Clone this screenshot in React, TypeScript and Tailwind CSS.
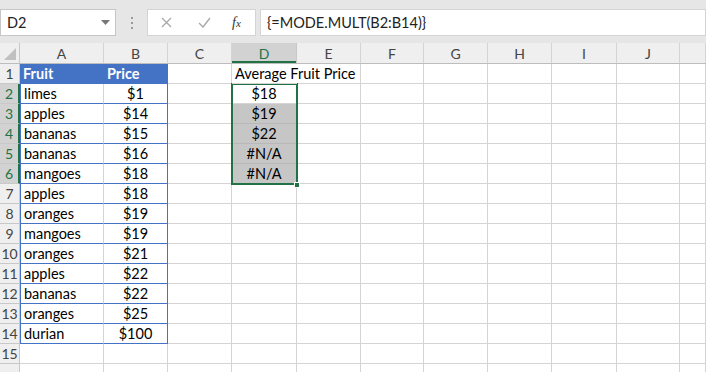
import React from "react";

const cols = [
  { l: "A", w: 84 },
  { l: "B", w: 64 },
  { l: "C", w: 64 },
  { l: "D", w: 65 },
  { l: "E", w: 64 },
  { l: "F", w: 63 },
  { l: "G", w: 64 },
  { l: "H", w: 64 },
  { l: "I", w: 65 },
  { l: "J", w: 63 },
  { l: "", w: 26 },
];

const data: [string, string][] = [
  ["limes", "$1"],
  ["apples", "$14"],
  ["bananas", "$15"],
  ["bananas", "$16"],
  ["mangoes", "$18"],
  ["apples", "$18"],
  ["oranges", "$19"],
  ["mangoes", "$19"],
  ["oranges", "$21"],
  ["apples", "$22"],
  ["bananas", "$22"],
  ["oranges", "$25"],
  ["durian", "$100"],
];

const dvals = ["$18", "$19", "$22", "#N/A", "#N/A"];

const font = { fontFamily: "Lato, 'Open Sans', sans-serif" };

export default function App() {
  const rows = Array.from({ length: 16 }, (_, i) => i + 1);
  return (
    <div className="w-[706px] h-[372px] overflow-hidden bg-white text-[#222]" style={font}>
      {/* formula bar */}
      <div className="h-[43px] bg-[#e6e6e6] flex items-start pt-[9px]">
        <div className="w-[116px] h-[27px] bg-white border border-[#c6c6c6] flex items-center justify-between pl-[6px] pr-[5px] text-[14.5px]">
          <span>D2</span>
          <svg width="9" height="5" viewBox="0 0 9 5"><path d="M0 0h9L4.5 5z" fill="#777" /></svg>
        </div>
        <div className="w-[31px] h-[27px] flex items-center justify-center">
          <div className="flex flex-col gap-[3px]">
            <div className="w-[2px] h-[2px] bg-[#9a9a9a]" />
            <div className="w-[2px] h-[2px] bg-[#9a9a9a]" />
            <div className="w-[2px] h-[2px] bg-[#9a9a9a]" />
          </div>
        </div>
        <div className="w-[109px] h-[27px] bg-white border border-[#d4d4d4] flex items-center">
          <svg className="ml-[13px]" width="11" height="11" viewBox="0 0 11 11"><path d="M1 1l9 9M10 1l-9 9" stroke="#a8a8a8" strokeWidth="1.3" /></svg>
          <svg className="ml-[26px]" width="13" height="11" viewBox="0 0 13 11"><path d="M1 6l4 4 7-9" stroke="#a8a8a8" strokeWidth="1.4" fill="none" /></svg>
          <span className="ml-[21px] italic text-[14px] text-[#333]" style={{ fontFamily: "'Liberation Serif', serif" }}>
            f<span className="text-[11px]">x</span>
          </span>
        </div>
        <div className="ml-[4px] flex-1 h-[27px] bg-white border border-[#d4d4d4] flex items-center pl-[6px] text-[14.5px]">
          {"{=MODE.MULT(B2:B14)}"}
        </div>
      </div>
      {/* column headers */}
      <div className="flex h-[21px] bg-[#efefef] border-b border-[#bdbdbd]">
        <div className="w-[20px] shrink-0 border-r border-[#c8c8c8] relative">
          <svg className="absolute right-[3px] bottom-[3px]" width="12" height="12" viewBox="0 0 12 12"><path d="M12 0v12H0z" fill="#c0c0c0" /></svg>
        </div>
        {cols.map((c) => (
          <div
            key={c.l + c.w}
            style={{ width: c.w }}
            className={
              "shrink-0 flex items-center justify-center text-[14px] border-r " +
              (c.l === "D"
                ? "bg-[#d2d2d2] text-[#217346] border-[#c8c8c8] shadow-[inset_0_-2px_0_#217346]"
                : "text-[#444] border-[#d4d4d4]")
            }
          >
            {c.l}
          </div>
        ))}
      </div>
      {/* rows */}
      <div className="relative">
        {rows.map((r) => {
          const sel = r >= 2 && r <= 6;
          return (
            <div key={r} className="flex h-[20px]">
              <div
                className={
                  "w-[20px] shrink-0 flex items-center justify-center text-[14px] border-b border-r " +
                  (sel
                    ? "bg-[#d2d2d2] text-[#217346] border-b-[#c8c8c8] border-r-[#217346] border-r-2"
                    : "bg-[#efefef] text-[#444] border-[#c8c8c8]")
                }
              >
                {r <= 15 ? r : ""}
              </div>
              {cols.map((c, ci) => {
                let content: React.ReactNode = null;
                let cls = "border-b border-r border-[#d4d4d4]";
                if (r === 1 && ci <= 1) {
                  cls = "bg-[#4472c4] text-white font-bold border-b border-[#4472c4]" + (ci === 1 ? " border-r" : "");
                  content = <span className="pl-[3px]">{ci === 0 ? "Fruit" : "Price"}</span>;
                } else if (r >= 2 && r <= 14 && ci <= 1) {
                  cls = "border-b border-b-[#4472c4] border-r " + (ci === 0 ? "border-r-[#d4d4d4] border-l border-l-[#4472c4]" : "border-r-[#4472c4]");
                  content =
                    ci === 0 ? (
                      <span className="pl-[3px]">{data[r - 2][0]}</span>
                    ) : (
                      <span className="w-full text-center">{data[r - 2][1]}</span>
                    );
                } else if (r === 1 && ci === 3) {
                  content = <span className="pl-[3px] whitespace-nowrap">Average Fruit Price</span>;
                  cls = "border-b border-[#d4d4d4] relative z-10";
                } else if (r >= 2 && r <= 6 && ci === 3) {
                  cls = "border-b border-r border-[#d4d4d4] " + (r === 2 ? "bg-white" : "bg-[#c6c6c6] border-b-[#b8b8b8]");
                  content = <span className="w-full text-center">{dvals[r - 2]}</span>;
                }
                return (
                  <div
                    key={ci}
                    style={{ width: c.w }}
                    className={"shrink-0 flex items-center pt-[1px] text-[14.5px] text-black " + cls}
                  >
                    {content}
                  </div>
                );
              })}
            </div>
          );
        })}
        {/* selection border */}
        <div className="absolute left-[231px] top-[19px] w-[67px] h-[102px] border-2 border-[#217346] pointer-events-none" />
        <div className="absolute left-[294px] top-[118px] w-[6px] h-[6px] bg-[#217346] border border-white pointer-events-none" />
      </div>
    </div>
  );
}
